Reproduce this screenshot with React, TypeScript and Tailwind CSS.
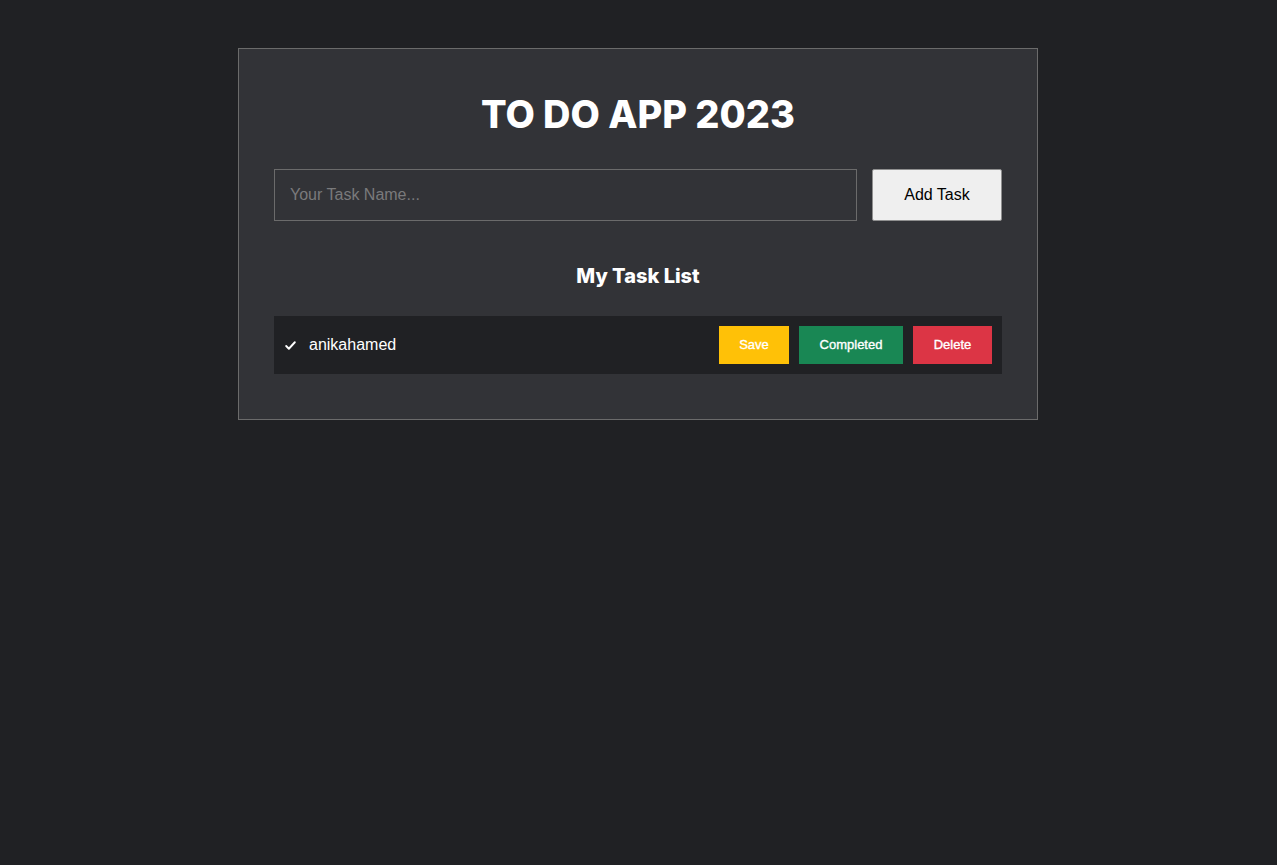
import React from "react";

export default function App() {
  return (
    <div className="min-h-[865px] w-full bg-[#202124] pt-[48px] pr-[1px]" style={{ fontFamily: "'Liberation Sans', Arial, sans-serif" }}>
      <div className="mx-auto w-[800px] border border-[#6b6b6b] bg-[#323337] px-[35px] pt-[41px] pb-[45px]">
        <h1 className="text-center text-[38px] leading-[48px] font-extrabold text-white" style={{ fontFamily: "Inter, sans-serif" }}>
          TO DO APP 2023
        </h1>
        <div className="mt-[31px] flex items-stretch gap-[15px]">
          <input
            className="h-[52px] flex-1 border border-[#6b6b6b] bg-transparent px-[15px] text-[16px] text-white outline-none placeholder:text-[#7a7a7c]"
            placeholder="Your Task Name..."
          />
          <button className="h-[52px] w-[130px] rounded-[2px] border border-[#8f8f8f] bg-[#efefef] text-[16px] text-black">
            Add Task
          </button>
        </div>
        <h2 className="mt-[40px] text-center text-[20px] leading-[30px] font-extrabold text-white" style={{ fontFamily: "Inter, sans-serif" }}>
          My Task List
        </h2>
        <div className="mt-[25px] flex h-[58px] items-center bg-[#202124] pl-[10px] pr-[10px]">
          <svg width="13" height="13" viewBox="0 0 24 24" fill="none" stroke="white" strokeWidth="3.5" strokeLinecap="round" strokeLinejoin="round">
            <polyline points="4 13 9 18 20 6" />
          </svg>
          <span className="ml-[12px] text-[16px] text-white">anikahamed</span>
          <div className="ml-auto flex gap-[10px]">
            <button className="h-[38px] w-[70px] bg-[#ffc107] text-[13px] text-white [-webkit-text-stroke:0.35px_white]">Save</button>
            <button className="h-[38px] w-[104px] bg-[#198754] text-[13px] text-white [-webkit-text-stroke:0.35px_white]">Completed</button>
            <button className="h-[38px] w-[79px] bg-[#dc3545] text-[13px] text-white [-webkit-text-stroke:0.35px_white]">Delete</button>
          </div>
        </div>
      </div>
    </div>
  );
}
